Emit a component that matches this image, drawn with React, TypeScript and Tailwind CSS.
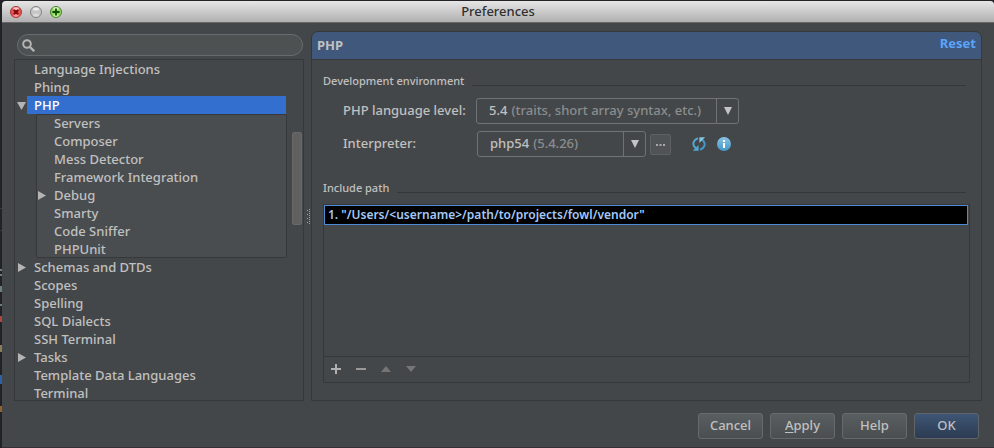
type NodeRow = { label: string; state?: "open" | "closed" };

const before: NodeRow[] = [{ label: "Language Injections" }, { label: "Phing" }];
const phpChildren: NodeRow[] = [
  { label: "Servers" },
  { label: "Composer" },
  { label: "Mess Detector" },
  { label: "Framework Integration" },
  { label: "Debug", state: "closed" },
  { label: "Smarty" },
  { label: "Code Sniffer" },
  { label: "PHPUnit" },
];
const after: NodeRow[] = [
  { label: "Schemas and DTDs", state: "closed" },
  { label: "Scopes" },
  { label: "Spelling" },
  { label: "SQL Dialects" },
  { label: "SSH Terminal" },
  { label: "Tasks", state: "closed" },
  { label: "Template Data Languages" },
  { label: "Terminal" },
];

function Disclosure({ state }: { state?: "open" | "closed" }) {
  return (
    <svg viewBox="0 0 9 9" className="h-[9px] w-[9px] shrink-0 fill-[#b4b4b4]" aria-hidden="true">
      {state === "open" && <path d="M0 1h9L4.5 9z" />}
      {state === "closed" && <path d="M1 0v9L9 4.5z" />}
    </svg>
  );
}

function TreeRow({ row, nested }: { row: NodeRow; nested?: boolean }) {
  return (
    <li>
      <button
        type="button"
        className={`flex h-[18px] w-full items-center gap-2 text-left leading-[18px] whitespace-nowrap ${nested ? "pl-px" : "pl-0.5"}`}
      >
        <Disclosure state={row.state} />
        {row.label}
      </button>
    </li>
  );
}

function SectionTitle({ title }: { title: string }) {
  return (
    <div className="flex items-center gap-2 pr-1">
      <h2 className="text-[11px] leading-4 font-medium">{title}</h2>
      <div className="mt-2 h-px flex-1 bg-[#343638]" />
    </div>
  );
}

function Combo({ id, value, note, className }: { id: string; value: string; note: string; className: string }) {
  return (
    <div className={`relative flex h-[26px] rounded-[3px] border border-[#707274] ${className}`}>
      <span className="flex flex-1 items-center gap-1 pl-3 whitespace-nowrap" aria-hidden="true">
        {value} <span className="text-[#8b8d8f]">{note}</span>
      </span>
      <span className="flex w-[22px] items-center justify-center border-l border-[#707274]" aria-hidden="true">
        <svg viewBox="0 0 8 8" className="h-2 w-2 fill-[#c4c4c4]">
          <path d="M0 0h8L4 8z" />
        </svg>
      </span>
      <select id={id} className="absolute inset-0 h-full w-full opacity-0">
        <option>{`${value} ${note}`}</option>
      </select>
    </div>
  );
}

const dialogButton =
  "h-[26px] w-[65px] rounded-[3px] border border-[#666a6c] bg-linear-to-b from-[#595e60] to-[#4a4e50]";

export default function App() {
  return (
    <div className="flex h-screen bg-[#222126] pt-px font-['Noto_Sans',sans-serif] text-[13px] font-medium text-[#c0c0c0]">
      {/* sliver of the editor window behind the dialog */}
      <svg className="h-full w-0.5 shrink-0" viewBox="0 0 2 447" preserveAspectRatio="none" aria-hidden="true">
        <path d="M0 207h2v1H0zM0 229h2v1H0z" fill="#3b3b3f" />
        <path d="M0 268h2v2H0zM0 273h2v2H0zM0 285h2v6H0zM0 303h2v2H0z" fill="#6d7f80" />
        <path d="M0 315h2v6H0z" fill="#b0453f" />
        <path d="M0 344h2v7H0z" fill="#8b7a5c" />
        <path d="M0 374h2v9H0z" fill="#2c62a8" />
        <path d="M0 405h2v6H0z" fill="#94602f" />
      </svg>
      <div className="flex min-w-0 flex-1 flex-col overflow-hidden rounded-t-[4px] border-b border-[#353032] bg-[#444749]">
        <header className="flex h-[22px] shrink-0 items-center border-b border-[#686868] bg-linear-to-b from-[#e6e6e6] to-[#b0b0b0] px-2">
          <div className="flex flex-1 gap-2">
            <button type="button" aria-label="Close">
              <svg viewBox="0 0 12 12" className="h-3 w-3">
                <circle cx="6" cy="6" r="5.5" fill="#ee5053" stroke="#a03c3e" />
                <ellipse cx="6" cy="2.6" rx="3" ry="1.4" fill="#fac4c0" />
                <ellipse cx="6" cy="9.6" rx="2.6" ry="1.2" fill="#ff9a94" />
                <path d="M3.8 3.8l4.4 4.4M8.2 3.8L3.8 8.2" stroke="#720808" strokeWidth="1.9" />
              </svg>
            </button>
            <button type="button" aria-label="Minimize">
              <svg viewBox="0 0 12 12" className="h-3 w-3">
                <circle cx="6" cy="6" r="5.5" fill="#c6c6c6" stroke="#848484" />
                <ellipse cx="6" cy="3" rx="3" ry="1.6" fill="#ececec" />
                <ellipse cx="6" cy="9" rx="3" ry="1.6" fill="#dcdcdc" />
              </svg>
            </button>
            <button type="button" aria-label="Zoom">
              <svg viewBox="0 0 12 12" className="h-3 w-3">
                <circle cx="6" cy="6" r="5.5" fill="#93dc62" stroke="#4c7d36" />
                <ellipse cx="6" cy="2.6" rx="3" ry="1.4" fill="#d8f3c6" />
                <ellipse cx="6" cy="9.6" rx="2.6" ry="1.2" fill="#c6f59d" />
                <path d="M6 2.4v7.2M2.4 6h7.2" stroke="#0d4d04" strokeWidth="1.8" />
              </svg>
            </button>
          </div>
          <h1 className="text-[13px] font-medium text-[#303030]">Preferences</h1>
          <div className="flex-1" />
        </header>

        <div className="flex min-h-0 flex-1 px-3 pt-2">
          <aside className="flex w-[290px] shrink-0 flex-col pt-[3px]">
            <label className="mr-px ml-[3px] flex h-[22px] shrink-0 items-center gap-2 rounded-full border border-[#686b6d] bg-[#4d5152] px-1">
              <svg viewBox="0 0 13 13" className="h-[13px] w-[13px]" fill="none" stroke="#b4b4b4" strokeWidth="2">
                <circle cx="5" cy="5" r="3.8" />
                <path d="M8 8l4.2 4.2" strokeWidth="2.4" />
              </svg>
              <input type="search" aria-label="Search preferences" className="min-w-0 flex-1 bg-transparent outline-none" />
            </label>
            <nav aria-label="Preferences" className="mt-[3px] flex min-h-0 flex-1 overflow-hidden border border-[#36383a]">
              <ul className="min-w-0 flex-1">
                {before.map((row) => (
                  <TreeRow key={row.label} row={row} />
                ))}
                <li>
                  <button type="button" className="flex h-[18px] w-full items-center pr-px pl-0.5 text-left leading-[18px] text-white">
                    <Disclosure state="open" />
                    <span className="ml-px flex-1 bg-[#336fcf] pl-[7px]">PHP</span>
                  </button>
                  <ul className="ml-[21px] rounded-[2px] bg-[#4a4d4f] outline-1 -outline-offset-1 outline-[#36383a]">
                    {phpChildren.map((row) => (
                      <TreeRow key={row.label} row={row} nested />
                    ))}
                  </ul>
                </li>
                {after.map((row) => (
                  <TreeRow key={row.label} row={row} />
                ))}
              </ul>
              <div className="w-4 shrink-0 pt-[72px] pr-px pl-[5px]">
                <div className="h-[93px] rounded-[2px] border border-[#686868] bg-[#606060]" />
              </div>
            </nav>
          </aside>

          <div className="flex w-[7px] shrink-0 items-center justify-center" aria-hidden="true">
            <svg viewBox="0 0 4 15" className="h-[15px] w-1 fill-[#a0a0a0]">
              {[0, 4, 8, 12].map((y) => (
                <path key={y} d={`M3 ${y}h1v1h-1zM1 ${y + 1}h1v1h-1zM3 ${y + 2}h1v1h-1z`} />
              ))}
            </svg>
          </div>

          <main className="flex min-w-0 flex-1 flex-col rounded-t-[7px] border border-[#36383a]">
            <div className="flex h-7 shrink-0 justify-between rounded-t-[6px] border-b border-[#36383a] bg-[#3f587c] px-[5px] font-bold">
              <h2 className="leading-[27px]">PHP</h2>
              <a href="#reset" className="leading-[23px] text-[#5ba4fa]">
                Reset
              </a>
            </div>
            <div className="flex min-h-0 flex-1 flex-col px-[11px] pt-[13px] pb-[17px]">
              <SectionTitle title="Development environment" />
              <div className="mt-[9px] flex items-center pl-5">
                <label htmlFor="level" className="w-[133px]">
                  PHP language level:
                </label>
                <Combo id="level" value="5.4" note="(traits, short array syntax, etc.)" className="w-[263px]" />
              </div>
              <div className="mt-[7px] flex items-center pl-5">
                <label htmlFor="interpreter" className="w-[134px]">
                  Interpreter:
                </label>
                <Combo id="interpreter" value="php54" note="(5.4.26)" className="w-[169px]" />
                <button
                  type="button"
                  aria-label="Browse interpreters"
                  className="mt-px ml-1 flex h-[21px] w-[21px] items-center justify-center rounded-[2px] border border-[#5d6163] bg-[#505355]"
                >
                  <svg viewBox="0 0 9 2" className="h-0.5 w-[9px] fill-[#a8a8a8]">
                    <path d="M0 0h2v2h-2zM3.5 0h2v2h-2zM7 0h2v2h-2z" />
                  </svg>
                </button>
                <button type="button" aria-label="Reload" className="ml-[21px]">
                  <svg viewBox="0 0 14 14" className="h-[14px] w-[14px]" fill="none" strokeWidth="2">
                    <path d="M6 1.2C1.6 2.6.2 6.6 2.4 9.8L4 11.4" stroke="#55a7d2" />
                    <path d="M8 12.8C12.400 11.4 13.8 7.400 11.6 4.200L10 2.600" stroke="#4797c4" />
                    <path d="M.8 13.8h5.800V8z" fill="#55a7d2" />
                    <path d="M13.200.2H7.400V6z" fill="#86c2e0" />
                  </svg>
                </button>
                <button type="button" aria-label="Information" className="ml-[11px]">
                  <svg viewBox="0 0 14 14" className="h-[14px] w-[14px]">
                    <defs>
                      <linearGradient id="info" x1="0" y1="0" x2="0" y2="1">
                        <stop offset="0" stopColor="#8ac4e4" />
                        <stop offset="1" stopColor="#4496c6" />
                      </linearGradient>
                    </defs>
                    <circle cx="7" cy="7" r="7" fill="url(#info)" />
                    <path d="M6 3h2v2H6zM6 6h2v5H6z" fill="#fff" />
                  </svg>
                </button>
              </div>
              <div className="mt-[23px]">
                <SectionTitle title="Include path" />
              </div>
              <div className="mt-2 flex min-h-0 flex-1 flex-col border border-[#36383a]">
                <ul className="flex-1">
                  <li className="mr-px h-5 border border-[#4b8bd6] bg-black pl-[3px] text-[12px] leading-[18px] font-semibold text-[#a4c8f8]">
                    1. "/Users/&lt;username&gt;/path/to/projects/fowl/vendor"
                  </li>
                </ul>
                <div className="flex h-[26px] items-center gap-[15px] border-t border-[#36383a] pb-0.5 pl-[7px]">
                  <button type="button" aria-label="Add">
                    <svg viewBox="0 0 10 10" className="h-[10px] w-[10px] fill-[#b0b0b0]">
                      <path d="M4 0h2v4h4v2H6v4H4V6H0V4h4z" />
                    </svg>
                  </button>
                  <button type="button" aria-label="Remove">
                    <svg viewBox="0 0 10 10" className="h-[10px] w-[10px] fill-[#999]">
                      <path d="M0 4h10v2H0z" />
                    </svg>
                  </button>
                  <button type="button" aria-label="Move up">
                    <svg viewBox="0 0 10 10" className="h-[10px] w-[10px] fill-[#757575]">
                      <path d="M5 2l5 6H0z" />
                    </svg>
                  </button>
                  <button type="button" aria-label="Move down">
                    <svg viewBox="0 0 10 10" className="h-[10px] w-[10px] fill-[#757575]">
                      <path d="M0 2h10L5 8z" />
                    </svg>
                  </button>
                </div>
              </div>
            </div>
          </main>
        </div>

        <footer className="flex shrink-0 justify-end gap-[7px] pt-3 pr-[15px] pb-2">
          <button type="button" className={dialogButton}>Cancel</button>
          <button type="button" className={dialogButton}>
            <span className="underline underline-offset-2">A</span>pply
          </button>
          <button type="button" className={dialogButton}>Help</button>
          <button
            type="submit"
            className="h-[26px] w-[65px] rounded-[3px] border border-[#5f6468] bg-linear-to-b from-[#3e5675] to-[#2c3b52]"
          >
            OK
          </button>
        </footer>
      </div>
    </div>
  );
}
